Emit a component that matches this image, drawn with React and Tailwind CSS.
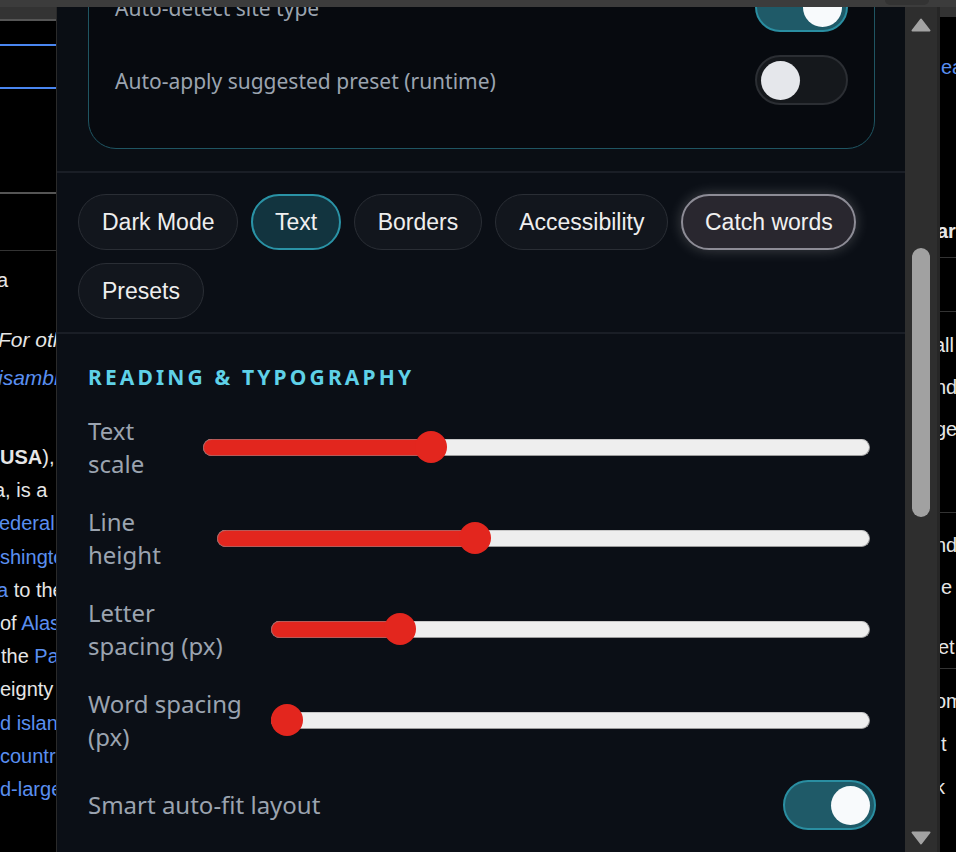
import React from "react";

const sans = "font-['Noto_Sans','Open_Sans',sans-serif]";
const arial = "font-['Liberation_Sans',Arial,sans-serif]";

function Toggle({ on }) {
  return on ? (
    <div className="w-[93px] h-[50px] shrink-0 rounded-full border-2 border-[#2a8ea1] bg-[#1f5a68] px-[4px] flex items-center justify-end">
      <div className="w-[39px] h-[39px] rounded-full bg-[#f8fafc]" />
    </div>
  ) : (
    <div className="w-[93px] h-[50px] shrink-0 rounded-full border-2 border-[#2b2e33] bg-[#15181c] px-[4px] flex items-center justify-start">
      <div className="w-[39px] h-[39px] rounded-full bg-[#e5e7eb]" />
    </div>
  );
}

function Slider({ value }) {
  return (
    <div className="relative flex-1 h-[32px] mr-[6px] flex items-center">
      <div className="w-full h-[17px] rounded-full bg-[#eeeeee] border border-[#9c9c9c] border-t-[#c8c8c8]" />
      <div
        className="absolute left-0 h-[17px] rounded-full bg-[#e2261e] border border-[#b65a58]"
        style={{ width: `calc((100% - 32px) * ${value} + 16px)` }}
      />
      <div
        className="absolute top-0 w-[32px] h-[32px] rounded-full bg-[#e3261e]"
        style={{ left: `calc((100% - 32px) * ${value})` }}
      />
    </div>
  );
}

function Chip({ children, variant }) {
  if (variant === "active") {
    return (
      <div className="h-[56px] px-[21.5px] rounded-full border-2 border-[#2a93a6] bg-[#12343f] text-[23px] text-[#f0f0f0] flex items-center">
        {children}
      </div>
    );
  }
  if (variant === "focus") {
    return (
      <div className="h-[56px] px-[21.5px] rounded-full border-2 border-[#8d8c96] bg-[#29272f] text-[23px] text-[#f0f0f0] flex items-center shadow-[0_0_14px_rgba(255,255,255,0.22)]">
        {children}
      </div>
    );
  }
  return (
    <div className="h-[56px] px-[23px] rounded-full border border-[#2a2e35] bg-[#12161d] text-[23px] text-[#eeeeee] flex items-center">
      {children}
    </div>
  );
}

function LeftPage() {
  const link = "text-[#5a8ff0]";
  const body = "text-[#e6e6e6]";
  return (
    <div className={`w-[56px] shrink-0 overflow-hidden bg-black flex flex-col text-[20px] ${arial}`}>
      <div className="h-[12px] shrink-0 bg-[#333333]" />
      <div className="h-[2px] shrink-0 bg-[#555555]" />
      <div className="h-[23px] shrink-0" />
      <div className="h-[2px] shrink-0 bg-[#4a86f0]" />
      <div className="h-[41px] shrink-0" />
      <div className="h-[2px] shrink-0 bg-[#4a86f0]" />
      <div className="h-[103px] shrink-0" />
      <div className="h-[2px] shrink-0 bg-[#555555]" />
      <div className="h-[56px] shrink-0" />
      <div className="h-px shrink-0 bg-[#333333]" />
      <div className="h-[13px] shrink-0" />
      <div className={`h-[33px] leading-[33px] shrink-0 whitespace-nowrap -ml-[3px] ${body}`}>a</div>
      <div className="h-[24px] shrink-0" />
      <div className={`h-[38px] leading-[38px] shrink-0 whitespace-nowrap italic -ml-[2px] text-[21px] ${body}`}>For other uses, see</div>
      <div className={`h-[38px] leading-[38px] shrink-0 whitespace-nowrap italic -ml-[2px] text-[21px] ${link}`}>isambiguation).</div>
      <div className="h-[44px] shrink-0" />
      <div className={`h-[33.2px] leading-[33px] shrink-0 whitespace-nowrap ${body}`}>
        <b>USA</b>), also
      </div>
      <div className={`h-[33.2px] leading-[33px] shrink-0 whitespace-nowrap -ml-[6px] ${body}`}>a, is a</div>
      <div className={`h-[33.2px] leading-[33px] shrink-0 whitespace-nowrap -ml-[1px] ${link}`}>ederal district</div>
      <div className={`h-[33.2px] leading-[33px] shrink-0 whitespace-nowrap ${link}`}>shington, D.C.</div>
      <div className={`h-[33.2px] leading-[33px] shrink-0 whitespace-nowrap -ml-[3px] ${body}`}>
        <span className={link}>a</span> to the north
      </div>
      <div className={`h-[33.2px] leading-[33px] shrink-0 whitespace-nowrap ${body}`}>
        of <span className={link}>Alaska</span>
      </div>
      <div className={`h-[33.2px] leading-[33px] shrink-0 whitespace-nowrap ml-[1px] ${body}`}>
        the <span className={link}>Pacific</span>
      </div>
      <div className={`h-[33.2px] leading-[33px] shrink-0 whitespace-nowrap ${body}`}>eignty over</div>
      <div className={`h-[33.2px] leading-[33px] shrink-0 whitespace-nowrap ${link}`}>d islands</div>
      <div className={`h-[33.2px] leading-[33px] shrink-0 whitespace-nowrap ${link}`}>countries</div>
      <div className={`h-[33.2px] leading-[33px] shrink-0 whitespace-nowrap ${link}`}>d-largest</div>
    </div>
  );
}

function RightPage() {
  const body = "text-[#e6e6e6]";
  return (
    <div className={`w-[16px] shrink-0 overflow-hidden bg-black flex flex-col text-[20px] ${arial}`}>
      <div className="h-[10px] shrink-0 bg-[#333333]" />
      <div className="h-[33px] shrink-0" />
      <div className="h-[34px] leading-[34px] shrink-0 whitespace-nowrap ml-[1px] text-[#5a8ff0]">earch</div>
      <div className="h-[130px] shrink-0" />
      <div className={`h-[34px] leading-[34px] shrink-0 whitespace-nowrap -ml-[3px] font-bold ${body}`}>ary</div>
      <div className="h-[9px] shrink-0" />
      <div className="h-px shrink-0 bg-[#333333]" />
      <div className="h-[53px] shrink-0" />
      <div className="h-px shrink-0 bg-[#333333]" />
      <div className="h-[12px] shrink-0" />
      <div className={`h-[42px] leading-[42px] shrink-0 whitespace-nowrap -ml-[6px] ${body}`}>all</div>
      <div className={`h-[42px] leading-[42px] shrink-0 whitespace-nowrap -ml-[5px] ${body}`}>nd</div>
      <div className={`h-[42px] leading-[42px] shrink-0 whitespace-nowrap -ml-[5px] ${body}`}>ge</div>
      <div className="h-[62px] shrink-0" />
      <div className="h-px shrink-0 bg-[#333333]" />
      <div className="h-[11px] shrink-0" />
      <div className={`h-[42px] leading-[42px] shrink-0 whitespace-nowrap -ml-[5px] ${body}`}>nd</div>
      <div className={`h-[42px] leading-[42px] shrink-0 whitespace-nowrap ml-[1px] ${body}`}>e</div>
      <div className="h-[18px] shrink-0" />
      <div className={`h-[42px] leading-[42px] shrink-0 whitespace-nowrap -ml-[2px] ${body}`}>et</div>
      <div className="h-px shrink-0 bg-[#333333]" />
      <div className="h-[11px] shrink-0" />
      <div className={`h-[43px] leading-[43px] shrink-0 whitespace-nowrap -ml-[5px] ${body}`}>om</div>
      <div className={`h-[43px] leading-[43px] shrink-0 whitespace-nowrap ml-[1px] ${body}`}>t</div>
      <div className={`h-[43px] leading-[43px] shrink-0 whitespace-nowrap -ml-[5px] ${body}`}>k</div>
    </div>
  );
}

function Scrollbar() {
  return (
    <div className="w-[35px] shrink-0 bg-[#2e2e2e] border-r-[3px] border-[#262626] flex flex-col items-center">
      <svg width="20" height="14" viewBox="0 0 20 14" className="mt-[11px] shrink-0">
        <path d="M10 1.5 L18.5 12.5 L1.5 12.5 Z" fill="#a3a3a3" stroke="#a3a3a3" strokeWidth="2" strokeLinejoin="round" />
      </svg>
      <div className="mt-[216px] w-[18px] h-[269px] shrink-0 rounded-full bg-[#a1a1a1]" />
      <div className="flex-1" />
      <svg width="20" height="14" viewBox="0 0 20 14" className="mb-[7px] shrink-0">
        <path d="M1.5 1.5 L18.5 1.5 L10 12.5 Z" fill="#a3a3a3" stroke="#a3a3a3" strokeWidth="2" strokeLinejoin="round" />
      </svg>
    </div>
  );
}

function SliderRow({ label, width, value }) {
  return (
    <div className="flex items-center h-[66px]">
      <div className={`${width} shrink-0 text-[24px] leading-[33px] text-[#9ba4b0]`}>{label}</div>
      <Slider value={value} />
    </div>
  );
}

function Panel() {
  return (
    <div className={`w-[849px] shrink-0 border-l border-[#2a2a2a] bg-[#0b0f16] overflow-hidden flex flex-col ${sans}`}>
      {/* site detection card */}
      <div className="shrink-0 flex flex-col bg-[#0a0e14] pl-[31px] pr-[30px] pb-[22px]">
        <div className="-mt-[50px] rounded-[28px] border border-[#1f5562] bg-[#070a0f] pt-[24px] pb-[43px] px-[26px] flex flex-col gap-[23px]">
          <div className="flex items-center justify-between h-[50px]">
            <span className="pt-[3px] text-[21px] text-[#9ba4b0]">Auto-detect site type</span>
            <Toggle on />
          </div>
          <div className="flex items-center justify-between h-[50px]">
            <span className="pt-[3px] text-[21px] text-[#9ba4b0]">Auto-apply suggested preset (runtime)</span>
            <Toggle />
          </div>
        </div>
      </div>

      {/* tabs */}
      <div className={`shrink-0 border-y-2 border-[#1a1e26] pl-[21px] pr-[21px] pt-[21px] pb-[13px] flex flex-wrap gap-[13px] ${arial}`}>
        <Chip>Dark Mode</Chip>
        <Chip variant="active">Text</Chip>
        <Chip>Borders</Chip>
        <Chip>Accessibility</Chip>
        <Chip variant="focus">Catch words</Chip>
        <Chip>Presets</Chip>
      </div>

      {/* reading & typography */}
      <div className="flex flex-col pl-[31px] pr-[29px] pt-[28px]">
        <div className="h-[30px] leading-[30px] mb-[22px] text-[21px] font-bold tracking-[0.15em] text-[#5fd1e8]">
          READING &amp; TYPOGRAPHY
        </div>
        <div className="flex flex-col gap-[25px]">
          <SliderRow label={<>Text<br />scale</>} width="w-[115px]" value={0.334} />
          <SliderRow label={<>Line<br />height</>} width="w-[129px]" value={0.39} />
          <SliderRow label={<>Letter<br />spacing (px)</>} width="w-[183px]" value={0.2} />
          <SliderRow label={<>Word spacing<br />(px)</>} width="w-[183px]" value={0} />
          <div className="mt-[2px] flex items-center justify-between">
            <span className="text-[24px] text-[#9ba4b0]">Smart auto-fit layout</span>
            <Toggle on />
          </div>
        </div>
      </div>
    </div>
  );
}

export default function App() {
  return (
    <div className="w-[956px] h-[852px] overflow-hidden bg-black flex flex-col">
      <div className="h-[7px] shrink-0 bg-[#3c3c3c] flex">
        <div className="ml-[885px] w-[44px] h-[5px] rounded-b-full bg-[#333333]" />
      </div>
      <div className="flex flex-1 min-h-0">
        <LeftPage />
        <Panel />
        <Scrollbar />
        <RightPage />
      </div>
    </div>
  );
}
